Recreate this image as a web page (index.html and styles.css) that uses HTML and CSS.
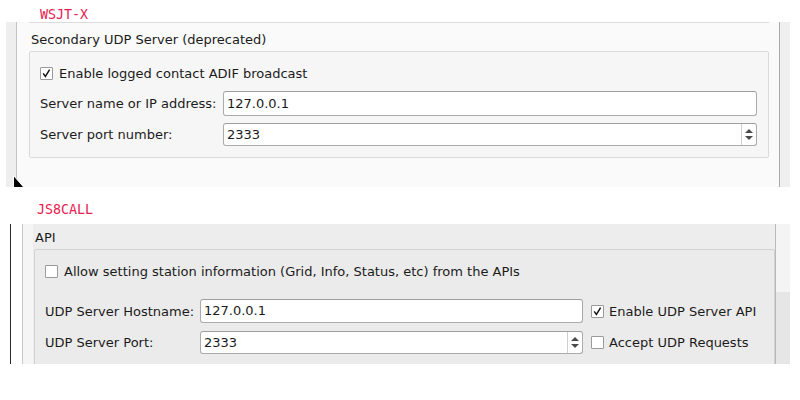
FILE: index.html
```html
<!DOCTYPE html>
<html>
<head>
<meta charset="utf-8">
<link rel="stylesheet" href="styles.css">
</head>
<body>
<div class="app-title title-wsjt">WSJT-X</div>
<section class="panel panel-wsjt">
  <div class="side-left"></div>
  <div class="pane pane-wsjt">
    <div class="prev-frame"></div>
    <div class="group-title gt-wsjt">Secondary UDP Server (deprecated)</div>
    <div class="frame frame-wsjt">
      <div class="check-row">
        <span class="cb"><svg viewBox="0 0 13 13" width="11" height="11"><path d="M2.6 6.4 L5.2 10 L10.2 1.8" fill="none" stroke="#111" stroke-width="1.7"/></svg></span>
        <span>Enable logged contact ADIF broadcast</span>
      </div>
      <div class="form-grid grid-wsjt">
        <span class="lbl">Server name or IP address:</span>
        <div class="field f-tall"><span class="val">127.0.0.1</span></div>
        <span class="lbl">Server port number:</span>
        <div class="field f-short">
          <span class="val">2333</span>
          <span class="spin"><span class="up"></span><span class="down"></span></span>
        </div>
      </div>
    </div>
  </div>
  <div class="side-right"></div>
  <svg class="cursor" width="14" height="14" viewBox="0 0 14 14"><polygon points="0.5,0.5 0.5,16 4,12.5 11,12.5" fill="#000" stroke="#fff" stroke-width="1"/></svg>
</section>

<div class="app-title title-js8">JS8CALL</div>
<section class="panel panel-js8">
  <div class="edge-dark"></div>
  <div class="edge-white"></div>
  <div class="side-left2"></div>
  <div class="pane pane-js8">
    <div class="group-title gt-js8">API</div>
    <div class="frame frame-js8">
      <div class="check-row">
        <span class="cb"></span>
        <span>Allow setting station information (Grid, Info, Status, etc) from the APIs</span>
      </div>
      <div class="form-grid grid-js8">
        <span class="lbl">UDP Server Hostname:</span>
        <div class="field f-host"><span class="val">127.0.0.1</span></div>
        <div class="check-inline">
          <span class="cb"><svg viewBox="0 0 13 13" width="11" height="11"><path d="M2.6 6.4 L5.2 10 L10.2 1.8" fill="none" stroke="#111" stroke-width="1.7"/></svg></span>
          <span>Enable UDP Server API</span>
        </div>
        <span class="lbl">UDP Server Port:</span>
        <div class="field f-port">
          <span class="val">2333</span>
          <span class="spin"><span class="up"></span><span class="down"></span></span>
        </div>
        <div class="check-inline">
          <span class="cb"></span>
          <span>Accept UDP Requests</span>
        </div>
      </div>
    </div>
  </div>
  <div class="side-right2"></div>
</section>
</body>
</html>
```

FILE: styles.css
```css
* { box-sizing: border-box; }
html, body { margin: 0; padding: 0; background: #fff; }
body {
  width: 800px;
  height: 400px;
  overflow: hidden;
  font-family: "DejaVu Sans", sans-serif;
  font-size: 13px;
  color: #1b1b1b;
}

.app-title {
  font-family: "DejaVu Sans Mono", monospace;
  font-size: 13.3px;
  line-height: 14px;
  color: #e8204f;
  font-weight: 300;
}
.title-wsjt { height: 22px; padding: 8px 0 0 40px; }
.title-js8 { height: 37px; padding: 16px 0 0 37px; }

.panel {
  position: relative;
  display: flex;
  overflow: hidden;
}
.panel-wsjt { height: 165px; margin-left: 6px; width: 784px; }
.panel-js8 { height: 140px; margin-left: 10px; width: 780px; }

.side-left { width: 11px; background: #eeeeee; border-right: 1px solid #c4c4c4; }
.side-right { width: 10px; background: #efefef; }
.edge-dark { width: 1px; background: #2a2a2a; }
.edge-white { width: 11px; background: #fff; }
.side-left2 { width: 11px; background: #f5f5f5; border-left: 1px solid #c8c8c8; }
.side-right2 {
  width: 14px;
  background: linear-gradient(to bottom, #f4f4f4 0, #f4f4f4 68px, #e6e6e6 68px);
}

.pane { flex: 1; display: flex; flex-direction: column; }
.pane-wsjt { background: #fafafa; border-right: 1px solid #a9a9a9; }
.pane-js8 { background: #ededed; border-right: 1px solid #b9b9b9; }

.prev-frame {
  height: 1px;
  margin: 0 10px 0 12px;
  background: #dcdcdc;
}

.group-title { line-height: 16px; }
.gt-wsjt { padding: 9px 0 2px 14px; height: 28px; }
.gt-js8 { padding: 6px 0 3px 2px; height: 25px; }

.frame {
  border: 1px solid #dadada;
  border-radius: 2px;
}
.frame-wsjt {
  margin: 0 10px 0 12px;
  background: #f6f6f6;
  padding: 10px 11px 11px 10px;
}
.frame-js8 {
  margin: 0 0 0 1px;
  background: #ebebeb;
  border-color: #d2d2d2;
  padding: 10px 10px 20px 10px;
}

.check-row, .check-inline {
  display: flex;
  align-items: center;
  height: 22px;
  white-space: nowrap;
}
.cb {
  width: 13px;
  height: 13px;
  border: 1px solid #9a9a9a;
  border-radius: 1px;
  background: #fff;
  margin-right: 6px;
  display: flex;
  align-items: center;
  justify-content: center;
  flex: none;
}
.check-inline .cb { margin-right: 5px; }

.form-grid { display: grid; align-items: center; }
.grid-wsjt {
  grid-template-columns: 183px 1fr;
  grid-template-rows: 25px 23px;
  row-gap: 7px;
  margin-top: 7px;
}
.grid-js8 {
  grid-template-columns: 155px 383px auto;
  grid-template-rows: 24px 23px;
  row-gap: 8px;
  margin-top: 17px;
}
.grid-js8 .check-inline { margin-left: 8px; }

.field {
  height: 100%;
  background: #fff;
  border: 1px solid #ababab;
  border-top-color: #9f9f9f;
  border-radius: 3px;
  display: flex;
  align-items: center;
}
.val { flex: 1; padding-left: 3px; line-height: 16px; }
.spin {
  width: 15px;
  height: 100%;
  border-left: 1px solid #cfcfcf;
  display: flex;
  flex-direction: column;
  align-items: center;
  justify-content: center;
  gap: 3px;
}
.up, .down {
  width: 0;
  height: 0;
  border-left: 4px solid transparent;
  border-right: 4px solid transparent;
}
.up { border-bottom: 4px solid #4a4a4a; }
.down { border-top: 4px solid #4a4a4a; }

.cursor {
  position: absolute;
  left: 7px;
  top: 153px;
}
```
